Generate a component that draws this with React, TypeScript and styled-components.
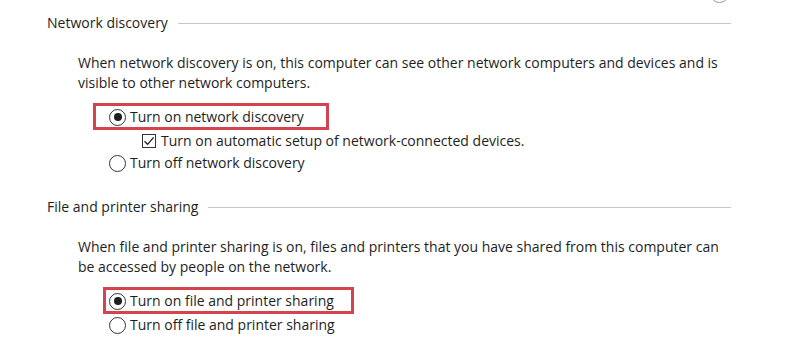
import React from "react";
import styled, { createGlobalStyle } from "styled-components";

const Global = createGlobalStyle`
  html, body { margin: 0; padding: 0; background: #ffffff; }
  body {
    font-family: "Segoe UI", "Open Sans", "Noto Sans", sans-serif;
    color: #1e1e1e;
    overflow: hidden;
  }
`;

const Page = styled.div`
  position: relative;
  width: 800px;
  height: 356px;
  box-sizing: border-box;
  padding: 13px 69px 0 47px;
  background: #fff;
  font-size: 14px;
`;

const CornerButton = styled.div`
  position: absolute;
  left: 710px;
  top: -16px;
  width: 17px;
  height: 17px;
  border: 1px solid #9a9a9a;
  border-radius: 50%;
`;

const Section = styled.section<{ $gap: number }>`
  margin-top: ${(p) => p.$gap}px;
`;

const HeadingRow = styled.div`
  display: flex;
  align-items: center;
  gap: 10px;
  height: 20px;
  line-height: 20px;
`;

const HeadingText = styled.span`
  white-space: nowrap;
`;

const Rule = styled.div`
  flex: 1;
  height: 1px;
  background: #c8c8c8;
`;

const Body = styled.div`
  padding-left: 31px;
`;

const Paragraph = styled.p`
  margin: 20px 0 10px 0;
  line-height: 20px;
  width: 650px;
`;

const Options = styled.div`
  padding-left: 31px;
`;

const Highlight = styled.div<{ $left: number; $right: number }>`
  display: inline-flex;
  align-items: center;
  box-sizing: border-box;
  height: 27px;
  padding: 1px ${(p) => p.$right}px 0 ${(p) => p.$left}px;
  margin-left: ${(p) => -(p.$left + 3)}px;
  border: 3px solid #d4444e;
`;

const OptionRow = styled.div<{ $indent?: number }>`
  display: flex;
  align-items: center;
  height: 22px;
  margin-left: ${(p) => p.$indent ?? 0}px;
  white-space: nowrap;
`;

const OptionInline = styled.div`
  display: flex;
  align-items: center;
  white-space: nowrap;
`;

const Radio = styled.span<{ $on?: boolean }>`
  box-sizing: border-box;
  width: 17px;
  height: 17px;
  border: 1px solid #333;
  border-radius: 50%;
  display: inline-flex;
  align-items: center;
  justify-content: center;
  margin-right: 4px;
  flex: none;
  &::after {
    content: "";
    display: ${(p) => (p.$on ? "block" : "none")};
    width: 8px;
    height: 8px;
    border-radius: 50%;
    background: #1e1e1e;
  }
`;

const Check = styled.span`
  box-sizing: border-box;
  width: 14px;
  height: 14px;
  border: 1px solid #333;
  display: inline-flex;
  align-items: center;
  justify-content: center;
  margin-right: 5px;
  flex: none;
  svg { display: block; }
`;

const Label = styled.span`
  line-height: 20px;
`;

const CheckMark = () => (
  <svg width="12" height="12" viewBox="0 0 12 12">
    <path d="M1.5 6.2 L4.6 9.3 L10.6 2.3" fill="none" stroke="#1e1e1e" strokeWidth="1.3" />
  </svg>
);

export default function App() {
  return (
    <>
      <Global />
      <Page>
        <CornerButton />
        <Section $gap={0}>
          <HeadingRow>
            <HeadingText>Network discovery</HeadingText>
            <Rule />
          </HeadingRow>
          <Body>
            <Paragraph>
              When network discovery is on, this computer can see other network computers and devices and is
              visible to other network computers.
            </Paragraph>
            <Options>
              <Highlight $left={13} $right={22}>
                <OptionInline>
                  <Radio $on />
                  <Label>Turn on network discovery</Label>
                </OptionInline>
              </Highlight>
              <OptionRow $indent={33}>
                <Check>
                  <CheckMark />
                </Check>
                <Label>Turn on automatic setup of network-connected devices.</Label>
              </OptionRow>
              <OptionRow>
                <Radio />
                <Label>Turn off network discovery</Label>
              </OptionRow>
            </Options>
          </Body>
        </Section>
        <Section $gap={23}>
          <HeadingRow>
            <HeadingText>File and printer sharing</HeadingText>
            <Rule />
          </HeadingRow>
          <Body>
            <Paragraph>
              When file and printer sharing is on, files and printers that you have shared from this computer can
              be accessed by people on the network.
            </Paragraph>
            <Options>
              <Highlight $left={3} $right={17}>
                <OptionInline>
                  <Radio $on />
                  <Label>Turn on file and printer sharing</Label>
                </OptionInline>
              </Highlight>
              <OptionRow>
                <Radio />
                <Label>Turn off file and printer sharing</Label>
              </OptionRow>
            </Options>
          </Body>
        </Section>
      </Page>
    </>
  );
}
